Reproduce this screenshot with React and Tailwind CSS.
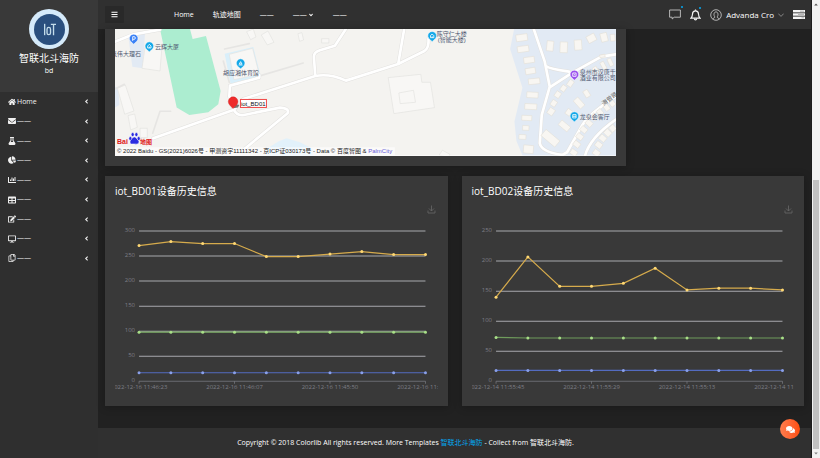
import React from "react";
import {
  FaHome, FaEnvelope, FaFlask, FaChartPie, FaChartBar, FaTable, FaEdit,
  FaDesktop, FaRegCopy, FaBars, FaAngleLeft, FaAngleDown, FaComments,
} from "react-icons/fa";

const DASHES = "——";

const menu = [
  { label: "Home", icon: FaHome },
  { label: DASHES, icon: FaEnvelope },
  { label: DASHES, icon: FaFlask },
  { label: DASHES, icon: FaChartPie },
  { label: DASHES, icon: FaChartBar },
  { label: DASHES, icon: FaTable },
  { label: DASHES, icon: FaEdit },
  { label: DASHES, icon: FaDesktop },
  { label: DASHES, icon: FaRegCopy },
];

function Sidebar() {
  return (
    <aside className="w-[98px] shrink-0 bg-[#2f2f2f]">
      <div className="flex h-[92px] flex-col items-center bg-[#393939] pt-[9px]">
        <div className="flex size-[40px] items-center justify-center rounded-full bg-[#d5eafa]">
          <svg viewBox="0 0 30 30" className="size-[31px]" aria-label="IoT">
            <circle cx="15" cy="15" r="15" fill="#2a4f7e" />
            <g fill="none" stroke="#c3dcea" strokeWidth="1.3">
              <path d="M10.3 9.5v11" />
              <rect x="12.6" y="13" width="3.4" height="7" rx="1.7" />
              <path d="M16.3 10h5M18.9 10v10.5" />
            </g>
          </svg>
        </div>
        <h1 className="mt-[3px] text-[10px] leading-[12px] text-white">智联北斗海防</h1>
        <p className="text-[7px] leading-[14px] text-white">bd</p>
      </div>
      <nav aria-label="Sidebar">
        <ul className="grid h-[176px] auto-rows-fr">
          {menu.map(({ label, icon: Icon }, i) => (
            <li key={i} className="flex">
              <a href="#" className="flex flex-1 items-center justify-between px-[8px] text-[7px] text-[#f0f0f0]">
                <span className="flex items-center gap-[1px]">
                  <Icon size={8} />
                  <span>{label}</span>
                </span>
                <FaAngleLeft size={7} />
              </a>
            </li>
          ))}
        </ul>
      </nav>
    </aside>
  );
}

function Header() {
  return (
    <header className="flex h-[29px] items-center justify-between bg-[#303030] pl-[7px] pr-[6px] text-white">
      <div className="flex items-center gap-[50px]">
        <button aria-label="Toggle menu" className="flex h-[17px] w-[19px] items-center justify-center rounded-[1px] bg-[#292929]">
          <FaBars size={7} />
        </button>
        <nav aria-label="Main" className="flex items-center gap-[19px] text-[7px] leading-[10px]">
          <a href="#">Home</a>
          <a href="#">轨迹地图</a>
          <a href="#">{DASHES}</a>
          <a href="#" className="flex items-center gap-[1px]">{DASHES}<FaAngleDown size={6} /></a>
          <a href="#">{DASHES}</a>
        </nav>
      </div>
      <div className="flex items-center gap-[9px]">
        <button aria-label="Messages" className="relative">
          <svg viewBox="0 0 12 11" className="h-[11px] w-[12px]" fill="none" stroke="#c4c4c4" strokeWidth="0.9">
            <path d="M.6 1h10.8v7.2H5.2L3.2 10V8.2H.6z" />
          </svg>
          <span className="absolute -right-[2px] -top-[3px] size-[2px] rounded-full bg-[#03a9f3]" />
        </button>
        <button aria-label="Notifications" className="relative">
          <svg viewBox="0 0 11 12" className="h-[12px] w-[11px]" fill="none" stroke="#f2f2f2" strokeWidth="1.2">
            <path d="M.9 9.2C2.4 8.2 2.4 6.8 2.5 5c.1-2 1.3-3.2 3-3.2S8.400 3 8.500 5c.1 1.800.1 3.200 1.600 4.200z" />
            <path d="M4.300 9.500c.1 1.800 2.300 1.800 2.400 0M5.500.6v1.200" />
          </svg>
          <span className="absolute right-0 -top-[2px] size-[2px] rounded-full bg-[#03a9f3]" />
        </button>
        <button className="flex items-center gap-[4px] text-[8px] leading-[10px]">
          <svg viewBox="0 0 12 12" className="size-[12px]" fill="none" stroke="#d0d0d0" strokeWidth="0.8">
            <circle cx="6" cy="6" r="5.300" />
            <path d="M2.800 10.200c.2-1.200 2-1.300 2.200-2.200C3.300 6.400 3.800 2.900 6 2.900s2.700 3.500 1 5.100c.2.9 2 1 2.200 2.200" />
          </svg>
          <span>Advanda Cro</span>
          <svg viewBox="0 0 6 4" className="h-[4px] w-[6px]" fill="none" stroke="#aaaaaa" strokeWidth="0.7">
            <path d="M.3.600 3 3.400 5.700.600" />
          </svg>
        </button>
        <button aria-label="Tasks">
          <svg viewBox="0 0 12 9" className="h-[9px] w-[12px]">
            <g fill="#f5f5f5">
              <rect width="12" height="2.400" />
              <rect y="3.300" width="12" height="2.400" />
              <rect y="6.600" width="12" height="2.400" />
            </g>
            <path d="M7 1.200h4M5 4.500h6M8.500 7.800H11" stroke="#8c8c8c" strokeWidth="0.600" />
          </svg>
        </button>
      </div>
    </header>
  );
}

/* [x, y, width, height, rotation] of the houses in the residential area */
const houses = [
  [486, 38, 34, 20, -8], [490, 72, 34, 18, -8], [508, 105, 32, 18, -8], [512, 138, 30, 18, -10],
  [523, 169, 34, 17, -6], [518, 210, 34, 17, 3], [513, 245, 36, 17, 3], [501, 279, 30, 15, 3],
  [498, 309, 19, 14, 3], [488, 336, 21, 14, 3], [506, 373, 30, 24, 5],
  [571, 63, 20, 30, 6], [612, 67, 22, 32, 2], [655, 60, 22, 30, -4], [695, 40, 26, 22, -28],
  [733, 37, 20, 26, -14], [759, 38, 14, 20, -5], [574, 260, 18, 20, 35], [582, 235, 16, 18, 35],
  [594, 209, 16, 18, 35], [611, 190, 15, 18, 35], [632, 175, 15, 20, 35], [681, 206, 15, 22, -32],
  [658, 234, 18, 32, -42], [627, 262, 16, 18, 35], [614, 303, 18, 34, -50], [572, 340, 24, 54, -50],
  [642, 383, 20, 16, 35], [651, 358, 20, 16, 38], [660, 335, 20, 16, 38], [672, 314, 20, 16, 40],
  [688, 295, 20, 16, 42], [704, 276, 20, 16, 45], [721, 262, 18, 15, 50], [741, 248, 18, 15, 52],
  [758, 236, 16, 15, 52], [710, 384, 20, 17, 38], [717, 360, 20, 17, 38], [729, 340, 20, 17, 40],
  [744, 324, 20, 17, 44], [759, 310, 18, 17, 48], [752, 112, 12, 24, -25], [731, 122, 12, 24, -28],
  [708, 135, 13, 20, -32], [728, 93, 16, 8, -10],
];

function Pin({ x, y, color, children }) {
  return (
    <g transform={`translate(${x} ${y})`}>
      <path d="M0 17 -6 11A13 13 0 1 1 6 11z" fill={color} stroke="#fff" strokeWidth="1.500" />
      <g fill="none" stroke="#fff" strokeWidth="2.500">{children}</g>
    </g>
  );
}

function MapView() {
  return (
    <svg viewBox="0 0 501 127" className="block w-full bg-[#f4f3f0]" role="img" aria-label="Map">
      <g transform="scale(0.33333) translate(-45 -12)">
        <g fill="#e2eaf4">
          <path d="M85 35 135 25 128 130 97 125z" />
          <path d="M45 185 55 190 58 240 45 248z" />
          <path d="M1243 12H1560V396H1270L1250 348 1244 290 1268 188 1231 72z" />
        </g>
        <path d="M500 372 535 350 560 340 600 352 640 372 640 396H500z" fill="#e2f1fa" />
        <path d="M180 12 H270L278 42 318 33 362 198 355 238 325 262 268 270 230 248z" fill="#acedd0" />
        <path d="m374 86 86-20 22 86-90 24z" fill="#d9effa" />
        <g fill="#f8f7f5" stroke="#e3e2e0" strokeWidth="2">
          <path d="m388 88 70-18 20 78-76 16z" />
          <path d="m136 60 50 4-6 74-54-8z" />
          <path d="m52 190 24-10 26 78-28 10zM84 272l20-5 8 40-20 8zM120 310h22v28h-22z" />
          <path d="m440 20 20-8 8 24-16 8zM484 30l20-12 18 34-20 8zM594 26l12-3 5 22-12 4zM665 41h22v13h-22z" />
          <path d="m865 158 98-10 3 24 26 0 12 76-122 18z" />
          <path d="m897 204 44-8 6 36-46 4zM1018 390l10-14 22 12-4 10z" />
        </g>
        <g fill="none" stroke="#e6e5e3" strokeWidth="5" strokeLinejoin="round" strokeLinecap="round">
          <path d="m374 72 74-16M482 152 610 114M370 108l18 64M158 325l22-66 32 0M45 192l28-14" />
        </g>
        {[["#e2e1df", 11], ["#ffffff", 8]].map(([c, w]) => (
          <g key={c} fill="none" stroke={c} strokeWidth={w} strokeLinejoin="round" strokeLinecap="round">
            <path d="M160 340 400 255 C425 240 400 225 388 215L390 182 478 158V150M430 222 646 153 Q690 145 738 167L895 117 913 12M646 153 642 95Q642 82 660 76L705 62 738 12" />
            <path d="M895 117 974 78Q988 68 986 40" />
            <path d="M400 252Q412 275 432 270L540 248Q570 250 563 265L430 375" />
            <path d="M45 50 100 28 180 14" />
            <path d="M1302 12 1335 110 1350 185 1326 270 1320 355Q1326 382 1388 390L1402 382 1448 300Q1470 265 1548 215M1338 123Q1350 132 1408 140M1352 186 1418 143 1505 95 1548 88M1455 396Q1468 340 1548 284" />
          </g>
        ))}
        <g transform="translate(780 0)" fill="#f8f6f2" stroke="#e2ddd2" strokeWidth="1.500">
          {houses.map(([x, y, w, h, r], i) => (
            <rect key={i} x={x - w / 2} y={y - h / 2} width={w} height={h} transform={`rotate(${r} ${x} ${y})`} />
          ))}
        </g>
        <Pin x={101} y={41} color="#3b82f6"><path d="M-3 7V-6H1Q5-6 5-2T1 2H-3" /></Pin>
        <Pin x={148} y={64} color="#14a8e8"><path d="M-5 5V-1L0-6 5-1V5zM0 5V1" /></Pin>
        <Pin x={422} y={115} color="#14a8e8"><path d="M-6 5H6M-4 2 0-5 4 2z" /></Pin>
        <Pin x={997} y={33} color="#14a8e8"><path d="M-5 5V-1L0-6 5-1V5zM0 5V1" /></Pin>
        <Pin x={1424} y={149} color="#9a51ee"><path d="M-5-5H5V5H-5zM-2-2Q0 2 2-2" /></Pin>
        <Pin x={1424} y={274} color="#14a8e8"><path d="M-5-5H5V5H-5zM-5 0H5" /></Pin>
        <path d="m400 250 10-12 8 2-4 8z" fill="#777" />
        <path d="M399 251 389 240A14.500 14.500 0 1 1 410 240z" fill="#ee2b2b" stroke="#c91f1f" strokeWidth="1" />
        <g fill="#2a2be0" stroke="#fff" strokeWidth="1.500">
          <ellipse cx="91" cy="341" rx="4.500" ry="6" />
          <ellipse cx="98" cy="329" rx="4.500" ry="6" />
          <ellipse cx="109" cy="329" rx="4.500" ry="6" />
          <ellipse cx="116" cy="341" rx="4.500" ry="6" />
          <path d="M103 336Q108 336 111 342 120 349 116 355 112 359 103 357 93 359 90 354 88 348 95 342 98 336 103 336z" />
        </g>
        <rect x="45" y="367" width="840" height="24" fill="#fff" opacity="0.600" />
        <path d="M45 394H1548" stroke="#fff" strokeWidth="5" />
      </g>
      <rect x="125.500" y="70.500" width="26" height="8" fill="#fff" stroke="#f04848" />
      <g className="text-[6px] [font-family:'Liberation_Sans','Noto_Sans_CJK_SC',sans-serif]" fill="#4f5870">
        <text x="40" y="20">云辉大厦</text>
        <text x="26" y="27" textAnchor="end">筑伟大理石</text>
        <text x="108" y="46">胡应湘体育馆</text>
        <text x="322" y="7">陈守仁大楼</text>
        <text x="323" y="13">(智能大楼)</text>
        <text x="465" y="45">泉州市汉唐千年</text>
        <text x="465" y="51">酒业有限公司</text>
        <text x="465" y="90">龙泉会客厅</text>
        <text x="489" y="77" transform="rotate(-38 489 77)" fill="#6b6b6b">海曾路</text>
        <text x="126" y="77" fill="#111">iot_BD01</text>
        <g fill="#e01818" className="font-bold">
          <text x="2" y="115" className="text-[7px]">Bai</text>
          <text x="25" y="115">地图</text>
        </g>
        <text x="2" y="124" fill="#222">
          © 2022 Baidu - GS(2021)6026号 - 甲测资字11111342 - 京ICP证030173号 - Data © 百度智图 &amp; <tspan fill="#6a60d8">PalmCity</tspan>
        </text>
      </g>
    </svg>
  );
}

const LEFT = 24;
const RIGHT = 310;
const TOP = 31;
const BOTTOM = 181;

const chartOne = {
  title: "iot_BD01设备历史信息",
  max: 300,
  times: ["2022-12-16 11:46:23", "2022-12-16 11:46:07", "2022-12-16 11:45:50", "2022-12-16 11:45:34"],
  series: [
    { color: "#536bc0", dot: "#8aa0ea", values: [17, 17, 17, 17, 17, 17, 17, 17, 17, 17] },
    { color: "#80b36a", dot: "#a9e088", values: [98, 98, 98, 98, 98, 98, 98, 98, 98, 98] },
    { color: "#d6ab4c", dot: "#ffd873", values: [271, 279, 275, 275, 249, 249, 254, 259, 253, 253] },
  ],
};

const chartTwo = {
  title: "iot_BD02设备历史信息",
  max: 250,
  times: ["2022-12-14 11:55:45", "2022-12-14 11:55:29", "2022-12-14 11:55:13", "2022-12-14 11:54:57"],
  series: [
    { color: "#536bc0", dot: "#8aa0ea", values: [18, 18, 18, 18, 18, 18, 18, 18, 18, 18] },
    { color: "#6f9c5c", dot: "#a9e088", values: [73, 72, 72, 72, 72, 72, 72, 72, 72, 72] },
    { color: "#d6ab4c", dot: "#ffd873", values: [140, 207, 158, 158, 163, 188, 152, 155, 155, 152] },
  ],
};

function ChartCard({ title, max, times, series }) {
  const px = (i) => LEFT + ((RIGHT - LEFT) * i) / 9;
  const py = (v) => BOTTOM - ((BOTTOM - TOP) * v) / max;
  const ticks = Array.from({ length: max / 50 + 1 }, (_, i) => i * 50);
  return (
    <section className="col-span-2 bg-[#393939] p-[10px] shadow-[0_1px_8px_rgba(0,0,0,0.25)]">
      <h2 className="text-[10px] leading-[10px] text-white">{title}</h2>
      <svg viewBox="0 0 322 196" className="mt-[4px] block w-full overflow-hidden text-[6px]" role="img" aria-label={title}>
        <path d="M312.500 10.500v2.500h7v-2.500M316 5.500V11M313.500 8.500l2.500 2.500L318.500 8.500" fill="none" stroke="#686868" strokeWidth="0.800" />
        {ticks.map((t) => (
          <g key={t}>
            <path d={`M${LEFT} ${py(t)}H${RIGHT}`} stroke={t ? "#a8a9ae" : "#6a6b72"} strokeWidth="1" />
            <text x="20" y={py(t) + 1} textAnchor="end" fill="#7e7f87">{t}</text>
          </g>
        ))}
        {times.map((t, i) => (
          <g key={t}>
            <path d={`M${px(i * 3)} ${BOTTOM}v2.500`} stroke="#7e7f87" strokeWidth="0.700" />
            <text x={px(i * 3)} y="189" textAnchor="middle" fill="#7e7f87">{t}</text>
          </g>
        ))}
        {series.map((s) => (
          <g key={s.color}>
            <polyline points={s.values.map((v, i) => `${px(i)},${py(v)}`).join(" ")} fill="none" stroke={s.color} strokeWidth="1.200" />
            {s.values.map((v, i) => <circle key={i} cx={px(i)} cy={py(v)} r="1.500" fill={s.dot} />)}
          </g>
        ))}
      </svg>
    </section>
  );
}

export default function App() {
  return (
    <div className="flex min-h-screen bg-[#212121] [font-family:'Open_Sans','Noto_Sans_CJK_SC',sans-serif]">
      <Sidebar />
      <div className="flex min-w-0 flex-1 flex-col">
        <Header />
        <main className="grid flex-1 grid-cols-4 content-start gap-x-[14px] gap-y-[10px] px-[7px] pb-[22px]">
          <section className="col-span-3 bg-[#393939] px-[10px] pb-[10px] shadow-[0_1px_8px_rgba(0,0,0,0.25)]">
            <MapView />
          </section>
          <ChartCard {...chartOne} />
          <ChartCard {...chartTwo} />
        </main>
        <footer className="flex h-[30px] items-center justify-center bg-[#303030] pr-[98px] text-[7px] text-white">
          <p>
            Copyright © 2018 Colorlib All rights reserved. More Templates <a href="#" className="text-[#03a9f3]">智联北斗海防</a> - Collect from 智联北斗海防.
          </p>
        </footer>
      </div>
      <div aria-hidden="true" className="flex w-[9px] shrink-0 flex-col items-center border-l border-[#1c1c1c] bg-[#f1f1f1]">
        <svg viewBox="0 0 8 9" className="h-[9px] w-[8px]"><path d="M2.200 5.500 4 3.500 5.800 5.500z" fill="#505050" /></svg>
        <div className="flex-[171]" />
        <div className="w-[6px] flex-[269] bg-[#c1c1c1]" />
        <svg viewBox="0 0 8 9" className="h-[9px] w-[8px]"><path d="M2.200 3.500 4 5.500 5.800 3.500z" fill="#808080" /></svg>
      </div>
      <button aria-label="Chat" className="fixed bottom-[19px] right-[20px] flex size-[20px] items-center justify-center rounded-full bg-linear-to-r from-[#ff7d4d] to-[#ff4d08] text-white">
        <FaComments size={9} />
      </button>
    </div>
  );
}
